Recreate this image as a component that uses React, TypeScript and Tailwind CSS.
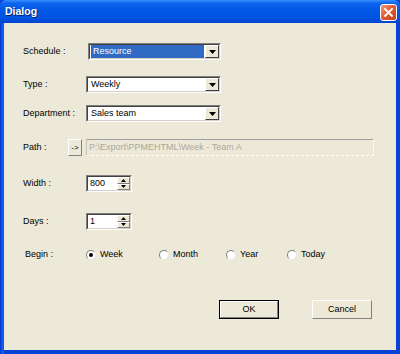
import React from "react";

function Sunken({ className, children }: { className?: string; children?: React.ReactNode }) {
  return (
    <div className={`border border-t-[#808080] border-l-[#808080] border-b-white border-r-white ${className ?? ""}`}>
      <div className="h-full w-full border border-t-[#404040] border-l-[#404040] border-b-[#d4d0c8] border-r-[#d4d0c8] flex">
        {children}
      </div>
    </div>
  );
}

function DropBtn() {
  return (
    <div className="w-[14px] h-full bg-[#ece9d8] border border-t-white border-l-white border-b-[#404040] border-r-[#404040] flex items-center justify-center">
      <svg width="7" height="4" viewBox="0 0 7 4">
        <polygon points="0,0 7,0 3.5,4" fill="#000" />
      </svg>
    </div>
  );
}

function Combo({ value, selected, className }: { value: string; selected?: boolean; className?: string }) {
  return (
    <Sunken className={`h-[17px] bg-white ${className ?? ""}`}>
      <div className="flex-1 flex items-center pl-[1px] pr-[1px]">
        <div className={`h-full flex-1 flex items-center pl-[2px] ${selected ? "bg-[#316ac5] text-white" : ""}`}>{value}</div>
      </div>
      <DropBtn />
    </Sunken>
  );
}

function Spin({ value }: { value: string }) {
  return (
    <Sunken className="h-[17px] w-[46px] bg-white">
      <div className="flex-1 flex items-center pl-[2px]">{value}</div>
      <div className="w-[13px] flex flex-col">
        <div className="flex-1 bg-[#ece9d8] border border-t-white border-l-white border-b-[#808080] border-r-[#808080] flex items-center justify-center">
          <svg width="5" height="3" viewBox="0 0 5 3"><polygon points="2.5,0 5,3 0,3" fill="#000" /></svg>
        </div>
        <div className="flex-1 bg-[#ece9d8] border border-t-white border-l-white border-b-[#808080] border-r-[#808080] flex items-center justify-center">
          <svg width="5" height="3" viewBox="0 0 5 3"><polygon points="0,0 5,0 2.5,3" fill="#000" /></svg>
        </div>
      </div>
    </Sunken>
  );
}

function Radio({ label, checked, className }: { label: string; checked?: boolean; className?: string }) {
  return (
    <div className={`flex items-center ${className ?? ""}`}>
      <div className="w-[10px] h-[10px] rounded-full bg-white border border-t-[#808080] border-l-[#808080] border-b-[#e8e8e8] border-r-[#e8e8e8] flex items-center justify-center">
        {checked && <div className="w-[4px] h-[4px] rounded-full bg-black" />}
      </div>
      <span className="ml-[4px]">{label}</span>
    </div>
  );
}

function Button({ label, def }: { label: string; def?: boolean }) {
  return (
    <div className={`w-[60px] h-[19px] ${def ? "border border-black" : ""}`}>
      <div className="w-full h-full bg-[#ece9d8] border border-t-white border-l-white border-b-[#808080] border-r-[#808080] flex items-center justify-center">
        {label}
      </div>
    </div>
  );
}

export default function App() {
  return (
    <div className="w-[400px] h-[354px] flex flex-col bg-[#0842d6] overflow-hidden font-['Liberation_Sans',Arial,sans-serif] text-[9px] text-black">
      <div className="h-[23px] flex items-center justify-between pl-[5px] pr-[3px] bg-[linear-gradient(to_bottom,#3a90ff_0px,#0f66ee_3px,#0058e6_10px,#0054e2_18px,#0048d4_22px,#003fc4_23px)] rounded-t-[6px]">
        <span className="text-white font-bold text-[10.5px] [text-shadow:1px_1px_0_#0a1e6e]">Dialog</span>
        <div className="w-[17px] h-[17px] mt-[1px] rounded-[3px] border border-white bg-[linear-gradient(135deg,#f09a7a,#e0592f_50%,#c4411c)] flex items-center justify-center">
          <svg width="9" height="9" viewBox="0 0 9 9">
            <path d="M1 1 L8 8 M8 1 L1 8" stroke="#fff" strokeWidth="1.8" strokeLinecap="round" />
          </svg>
        </div>
      </div>
      <div className="flex-1 px-[4px] pb-[4px] bg-[linear-gradient(to_right,#0831d9,#166aee_3px,#0842d6_4px)]">
        <div className="w-full h-full bg-[#ece9d8] flex flex-col pl-[19px]">
          <div className="flex items-center mt-[20px] h-[17px]">
            <span className="w-[65px]">Schedule :</span>
            <Combo value="Resource" selected className="w-[133px]" />
          </div>
          <div className="flex items-center mt-[16px] h-[17px]">
            <span className="w-[63px]">Type :</span>
            <Combo value="Weekly" className="w-[135px]" />
          </div>
          <div className="flex items-center mt-[12px] h-[17px]">
            <span className="w-[63px]">Department :</span>
            <Combo value="Sales team" className="w-[135px]" />
          </div>
          <div className="flex items-center mt-[17px] h-[17px]">
            <span className="w-[45px]">Path :</span>
            <div className="w-[14px] h-[17px] bg-[#ece9d8] border border-t-white border-l-white border-b-[#808080] border-r-[#808080] flex items-center justify-center text-[8px]">-&gt;</div>
            <div className="ml-[4px] w-[288px] h-[17px] border border-dashed [border-top-style:solid] [border-left-style:solid] border-t-[#a0a0a0] border-l-[#c8c5b8] border-b-white border-r-white flex items-center pl-[2px] text-[#aca899]">
              P:\Export\PPMEHTML\Week - Team A
            </div>
          </div>
          <div className="flex items-center mt-[19px] h-[17px]">
            <span className="w-[63px]">Width :</span>
            <Spin value="800" />
          </div>
          <div className="flex items-center mt-[21px] h-[17px]">
            <span className="w-[63px]">Days :</span>
            <Spin value="1" />
          </div>
          <div className="flex items-center mt-[18px] h-[14px]">
            <span className="w-[63px] pl-[2px]">Begin :</span>
            <Radio label="Week" checked className="w-[73px]" />
            <Radio label="Month" className="w-[67px]" />
            <Radio label="Year" className="w-[61px]" />
            <Radio label="Today" />
          </div>
          <div className="flex mt-[38px] pl-[196px] gap-[33px]">
            <Button label="OK" def />
            <Button label="Cancel" />
          </div>
        </div>
      </div>
    </div>
  );
}
